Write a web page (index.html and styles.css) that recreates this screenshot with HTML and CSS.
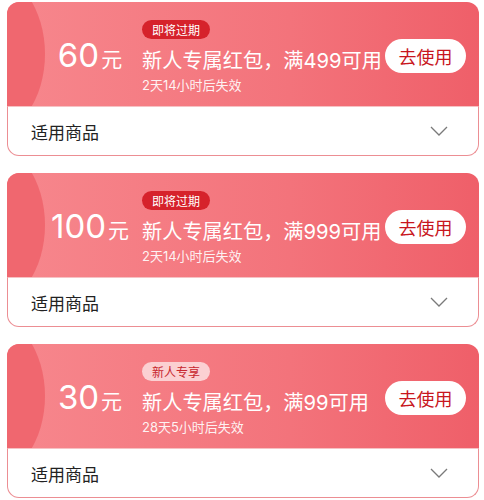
FILE: index.html
```html
<!DOCTYPE html>
<html lang="zh">
<head>
  <meta charset="UTF-8" />
  <meta name="viewport" content="width=device-width, initial-scale=1.0" />
  <title>红包</title>
  <link rel="stylesheet" href="styles.css">
</head>
<body>
  <div class="coupon">
    <div class="coupon-top">
      <div class="amount"><span class="num">60</span><span class="unit">元</span></div>
      <div class="info">
        <span class="tag">即将过期</span>
        <div class="title">新人专属红包，满499可用</div>
        <div class="expire">2天14小时后失效</div>
      </div>
      <button class="use-btn">去使用</button>
    </div>
    <div class="coupon-bottom">
      <span>适用商品</span>
      <svg class="arrow" width="18" height="10" viewBox="0 0 18 10"><polyline points="1,1 9,9 17,1" fill="none" stroke="#7a7a7a" stroke-width="1.3"/></svg>
    </div>
  </div>

  <div class="coupon">
    <div class="coupon-top">
      <div class="amount"><span class="num">100</span><span class="unit">元</span></div>
      <div class="info">
        <span class="tag">即将过期</span>
        <div class="title">新人专属红包，满999可用</div>
        <div class="expire">2天14小时后失效</div>
      </div>
      <button class="use-btn">去使用</button>
    </div>
    <div class="coupon-bottom">
      <span>适用商品</span>
      <svg class="arrow" width="18" height="10" viewBox="0 0 18 10"><polyline points="1,1 9,9 17,1" fill="none" stroke="#7a7a7a" stroke-width="1.3"/></svg>
    </div>
  </div>

  <div class="coupon">
    <div class="coupon-top">
      <div class="amount"><span class="num">30</span><span class="unit">元</span></div>
      <div class="info">
        <span class="tag tag-new">新人专享</span>
        <div class="title">新人专属红包，满99可用</div>
        <div class="expire">28天5小时后失效</div>
      </div>
      <button class="use-btn">去使用</button>
    </div>
    <div class="coupon-bottom">
      <span>适用商品</span>
      <svg class="arrow" width="18" height="10" viewBox="0 0 18 10"><polyline points="1,1 9,9 17,1" fill="none" stroke="#7a7a7a" stroke-width="1.3"/></svg>
    </div>
  </div>
</body>
</html>
```

FILE: styles.css
```css
body {
  margin: 0;
  padding: 2px 5px 0 7px;
  background-color: #fff;
  font-family: "Noto Sans CJK SC", "Noto Sans", sans-serif;
}

.coupon {
  margin-bottom: 17px;
}

.coupon-top {
  position: relative;
  overflow: hidden;
  display: flex;
  align-items: center;
  height: 104px;
  border-radius: 12px 12px 0 0;
  background: linear-gradient(to right, #f7878d, #f3737b 60%, #ef5f69);
  color: #fff;
}

.coupon-top::before {
  content: "";
  position: absolute;
  left: -78px;
  top: -30px;
  width: 116px;
  height: 164px;
  border-radius: 50%;
  background: #f0676f;
}

.amount {
  position: relative;
  display: flex;
  align-items: baseline;
  justify-content: center;
  width: 104px;
  margin-left: 31px;
  margin-top: 2px;
  font-family: "Inter", "Noto Sans CJK SC", sans-serif;
}

.num {
  font-size: 33px;
  font-weight: 400;
  line-height: 40px;
}

.unit {
  font-family: "Noto Sans CJK SC", sans-serif;
  font-size: 21px;
  margin-left: 2px;
}

.info {
  align-self: flex-start;
  padding-top: 14px;
}

.tag {
  display: inline-block;
  height: 19px;
  line-height: 19px;
  padding: 0 10px;
  border-radius: 10px;
  background-color: #d6222b;
  font-size: 12px;
}

.tag-new {
  background-color: #fbd0d2;
  color: #c8262e;
}

.title {
  margin-top: 9px;
  font-family: "Inter", "Noto Sans CJK SC", sans-serif;
  font-size: 20.2px;
  line-height: 24px;
}

.expire {
  margin-top: 3px;
  font-family: "Inter", "Noto Sans CJK SC", sans-serif;
  font-size: 13px;
  line-height: 18px;
  color: rgba(255, 255, 255, 0.92);
}

.use-btn {
  margin-left: auto;
  margin-right: 13px;
  margin-top: 4px;
  width: 81px;
  height: 34px;
  border: none;
  border-radius: 17px;
  background-color: #fff;
  color: #c8161d;
  font-family: inherit;
  font-size: 18px;
  padding: 0;
  flex-shrink: 0;
}

.coupon-bottom {
  display: flex;
  align-items: center;
  justify-content: space-between;
  height: 48px;
  padding: 0 30px 0 23px;
  border: 1px solid #ec8e93;
  border-top-color: #f6c2c4;
  border-radius: 0 0 12px 12px;
  font-size: 17px;
  color: #222;
}
```
